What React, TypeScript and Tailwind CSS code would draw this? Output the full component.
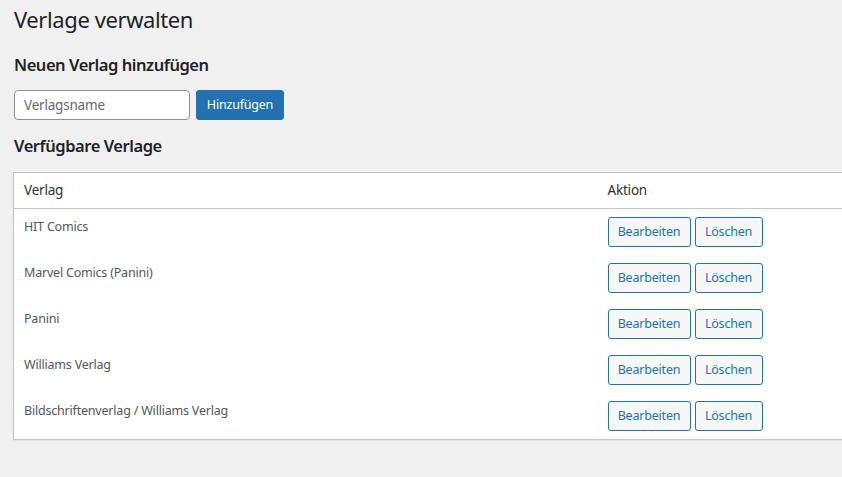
import React from 'react';

const verlage = [
  'HIT Comics',
  'Marvel Comics (Panini)',
  'Panini',
  'Williams Verlag',
  'Bildschriftenverlag / Williams Verlag',
];

const App = () => {
  return (
    <div className="min-h-screen w-full overflow-hidden bg-[#f0f0f1] pl-[13px] pt-[4px] font-['Noto_Sans',sans-serif] text-[12.5px] tracking-[-0.2px] text-[#3c434a]">
      <h1 className="pl-px text-[22px] font-normal leading-[30px] tracking-[-0.4px] text-[#1d2327]">Verlage verwalten</h1>

      <h2 className="mt-[20px] pl-px text-[16.5px] font-semibold leading-[22px] tracking-[-0.45px] text-[#1d2327]">
        Neuen Verlag hinzufügen
      </h2>

      <form className="mt-[14px] flex items-center gap-[6px] pl-px" onSubmit={(e) => e.preventDefault()}>
        <input
          type="text"
          placeholder="Verlagsname"
          className="h-[30px] w-[176px] rounded-[4px] border border-[#8c8f94] bg-white px-[9px] text-[13.5px] text-[#2c3338] outline-none placeholder:text-[#646970]"
        />
        <button
          type="submit"
          className="h-[30px] w-[88px] rounded-[3px] border border-[#2271b1] bg-[#2271b1] text-[12.5px] text-white"
        >
          Hinzufügen
        </button>
      </form>

      <h2 className="mt-[15px] pl-px text-[16.5px] font-semibold leading-[22px] tracking-[-0.45px] text-[#1d2327]">
        Verfügbare Verlage
      </h2>

      <table className="mt-[15px] w-[1000px] border-collapse border border-[#c3c4c7] bg-white shadow-[0_1px_1px_rgba(0,0,0,0.04)]">
        <thead>
          <tr className="border-b border-[#c3c4c7]">
            <th className="w-[584px] px-[10px] py-[8px] text-left text-[13.5px] font-normal leading-[19px] text-[#2c3338]">Verlag</th>
            <th className="px-[10px] py-[8px] text-left text-[13.5px] font-normal leading-[19px] text-[#2c3338]">Aktion</th>
          </tr>
        </thead>
        <tbody>
          {verlage.map((name) => (
            <tr key={name}>
              <td className="px-[10px] py-[8px] align-top leading-[19.5px] text-[#50575e]">{name}</td>
              <td className="px-[10px] py-[8px] align-top">
                <div className="flex gap-[4px]">
                  <button className="h-[30px] w-[83px] rounded-[3px] border border-[#2271b1] bg-[#f6f7f7] text-[12.5px] text-[#2271b1]">
                    Bearbeiten
                  </button>
                  <button className="h-[30px] w-[68px] rounded-[3px] border border-[#2271b1] bg-[#f6f7f7] text-[12.5px] text-[#2271b1]">
                    Löschen
                  </button>
                </div>
              </td>
            </tr>
          ))}
        </tbody>
      </table>
    </div>
  );
};

export default App;
